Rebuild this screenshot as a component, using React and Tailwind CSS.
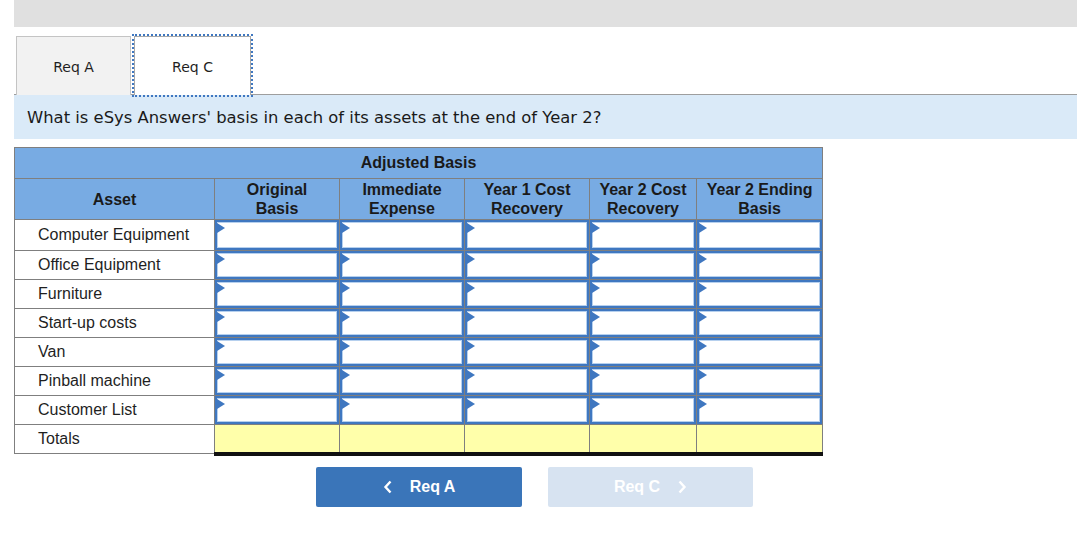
const assets = [
  'Computer Equipment',
  'Office Equipment',
  'Furniture',
  'Start-up costs',
  'Van',
  'Pinball machine',
  'Customer List',
]

const cols = ['w-[125px]', 'w-[125px]', 'w-[125px]', 'w-[107px]', 'w-[126px]']

function InputCell({ tall }) {
  return (
    <td className="border border-[#7f7f7f] p-0 align-top">
      <div
        className={`relative w-full border-2 border-[#3f77c0] bg-white shadow-[inset_0_0_0_1px_#b6d0ee] ${
          tall ? 'h-[30px]' : 'h-[28px]'
        }`}
      >
        <span className="absolute left-0 top-[1px] h-0 w-0 border-y-[5px] border-l-[8px] border-y-transparent border-l-[#3f77c0]" />
      </div>
    </td>
  )
}

export default function App() {
  return (
    <div className="min-h-[554px] bg-white pl-[14px] font-['Liberation_Sans',Arial,sans-serif] text-[#1f1f1f]">
      <div className="h-[27px] bg-[#e0e0e0]" />

      {/* tabs */}
      <div className="mt-[9px] flex items-end pl-[2px] font-['DejaVu_Sans',Verdana,sans-serif] text-[14px]">
        <div className="flex h-[59px] w-[115px] items-center justify-center border border-b-0 border-[#c4c4c4] bg-[#f2f2f2] pt-[2px]">
          Req A
        </div>
        <div className="ml-[3px] flex h-[59px] w-[117px] items-center justify-center border border-b-0 border-[#a8a8a8] bg-white pt-[2px] outline-2 outline-offset-[0px] outline-dotted outline-[#3f77c0]">
          Req C
        </div>
      </div>

      {/* question */}
      <div className="-mt-px flex h-[45px] items-center border-t border-[#9e9e9e] bg-[#daeaf8] pl-[13px] pt-[3px] font-['DejaVu_Sans',Verdana,sans-serif] text-[16.4px] text-[#1a1a1a]">
        What is eSys Answers' basis in each of its assets at the end of Year 2?
      </div>

      {/* table */}
      <table className="mt-[8px] w-[808px] table-fixed border-collapse text-[16px]">
        <colgroup>
          <col className="w-[200px]" />
          {cols.map((c, i) => (
            <col key={i} className={c} />
          ))}
        </colgroup>
        <thead>
          <tr className="h-[31px] bg-[#78abe3]">
            <th colSpan={6} className="border border-[#7f7f7f] font-bold text-[#1a1a1a]">
              Adjusted Basis
            </th>
          </tr>
          <tr className="h-[41px] bg-[#78abe3] leading-[19px] font-bold text-[#1a1a1a]">
            <th className="border border-[#7f7f7f]">Asset</th>
            <th className="border border-[#7f7f7f]">Original<br />Basis</th>
            <th className="border border-[#7f7f7f]">Immediate<br />Expense</th>
            <th className="border border-[#7f7f7f]">Year 1 Cost<br />Recovery</th>
            <th className="border border-[#7f7f7f]">Year 2 Cost<br />Recovery</th>
            <th className="border border-[#7f7f7f]">Year 2 Ending<br />Basis</th>
          </tr>
        </thead>
        <tbody>
          {assets.map((a, i) => (
            <tr key={a}>
              <td className="border border-[#7f7f7f] pl-[23px]">{a}</td>
              <InputCell tall={i === 0} />
              <InputCell tall={i === 0} />
              <InputCell tall={i === 0} />
              <InputCell tall={i === 0} />
              <InputCell tall={i === 0} />
            </tr>
          ))}
          <tr className="h-[29px]">
            <td className="border border-[#7f7f7f] pl-[23px]">Totals</td>
            {cols.map((c, i) => (
              <td
                key={i}
                className="border-x border-t border-b-4 border-x-[#7f7f7f] border-t-[#1f1f1f] border-b-[#111] border-b-double bg-[#ffffaa]"
              />
            ))}
          </tr>
        </tbody>
      </table>

      {/* nav buttons */}
      <div className="mt-[11px] flex gap-[26px] pl-[302px] font-bold text-[16px] text-white">
        <button
          type="button"
          className="flex h-[40px] w-[206px] items-center justify-center gap-[17px] rounded-[2px] bg-[#3a75b9]"
        >
          <svg width="10" height="14" viewBox="0 0 10 14" fill="none" stroke="white" strokeWidth="2.4">
            <path d="M7.5 1.5 L2.5 7 L7.5 12.5" />
          </svg>
          Req A
        </button>
        <button
          type="button"
          disabled
          className="flex h-[40px] w-[205px] items-center justify-center gap-[17px] rounded-[2px] bg-[#d7e3f1]"
        >
          Req C
          <svg width="10" height="14" viewBox="0 0 10 14" fill="none" stroke="white" strokeWidth="2.4">
            <path d="M2.5 1.5 L7.5 7 L2.5 12.5" />
          </svg>
        </button>
      </div>
    </div>
  )
}
